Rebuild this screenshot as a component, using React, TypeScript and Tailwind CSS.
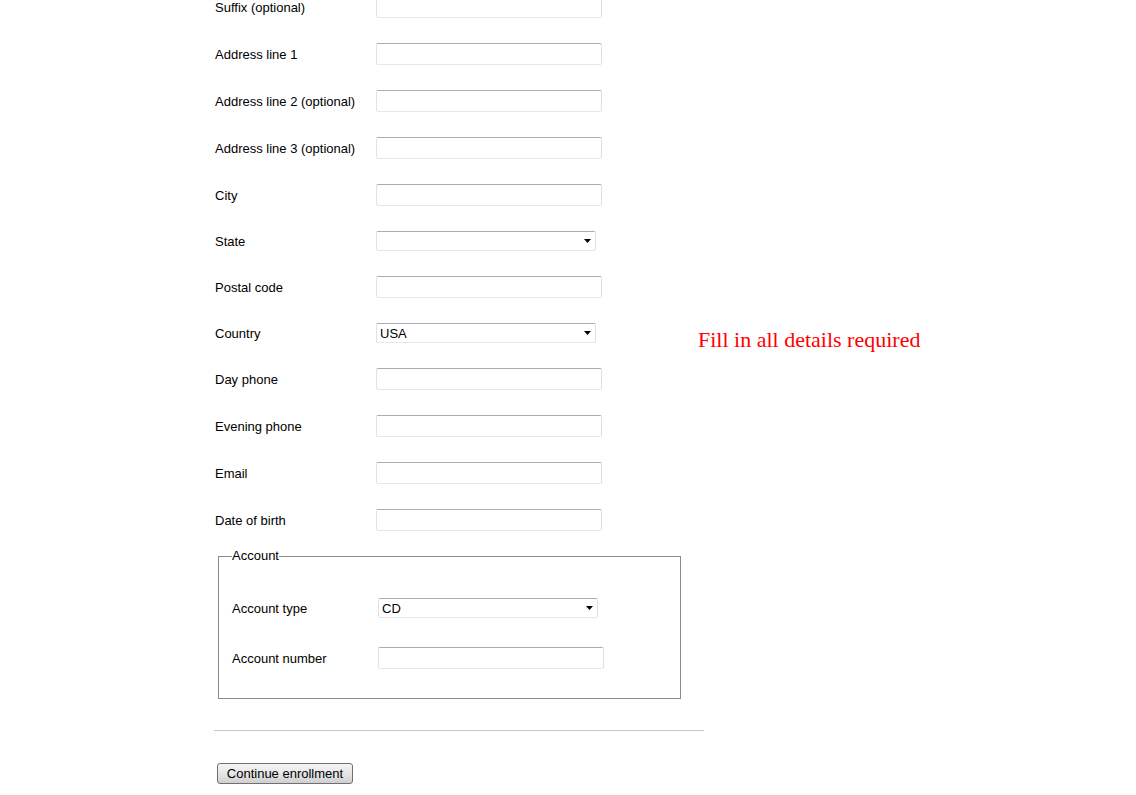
import React from "react";

type Field = { label: string; kind: "input" | "select"; value?: string };

// main enrollment fields, top of page is already scrolled past
const fields: Field[] = [
  { label: "Suffix (optional)", kind: "input" },
  { label: "Address line 1", kind: "input" },
  { label: "Address line 2 (optional)", kind: "input" },
  { label: "Address line 3 (optional)", kind: "input" },
  { label: "City", kind: "input" },
  { label: "State", kind: "select", value: "" },
  { label: "Postal code", kind: "input" },
  { label: "Country", kind: "select", value: "USA" },
  { label: "Day phone", kind: "input" },
  { label: "Evening phone", kind: "input" },
  { label: "Email", kind: "input" },
  { label: "Date of birth", kind: "input" },
];

function TextBox() {
  return (
    <input
      type="text"
      className="w-[226px] h-[22px] border border-[#e3e9ef] border-t-[#abadb3] border-l-[#e2e3ea] border-r-[#dbdfe6] rounded-[2px] bg-white px-[3px] text-[13px] outline-none"
    />
  );
}

function DropDown({ value }: { value: string }) {
  return (
    <div className="relative w-[220px] h-[20px] border border-[#e3e9ef] border-t-[#abadb3] border-l-[#e2e3ea] border-r-[#dbdfe6] rounded-[2px] bg-white flex items-center pl-[3px] text-[13px] leading-[15px] text-black">
      <span>{value}</span>
      <svg
        className="absolute right-[4px] top-[7px]"
        width="7"
        height="4"
        viewBox="0 0 7 4"
      >
        <path d="M0 0H7L3.5 4Z" fill="#000" />
      </svg>
    </div>
  );
}

export default function App() {
  return (
    <div className="min-h-[795px] w-full bg-white overflow-hidden font-['Liberation_Sans',Arial,sans-serif] text-[13px] leading-[15px] text-black">
      <div className="pl-[214px] mt-[-16px]">
        <div className="flex">
          {/* form column */}
          <div className="w-[484px]">
            {fields.map((f) => (
              <div key={f.label} className="flex items-center pl-[1px] pt-[12px] pb-[13px]">
                <span className="w-[161px]">{f.label}</span>
                {f.kind === "input" ? <TextBox /> : <DropDown value={f.value ?? ""} />}
              </div>
            ))}

            <fieldset className="ml-[4px] mt-[4px] w-[463px] border border-[#8a8a8a] px-[13px] pb-[29px]">
              <legend className="leading-[16px] px-0">Account</legend>
              <div className="flex items-center mt-[34px]">
                <span className="w-[146px]">Account type</span>
                <DropDown value="CD" />
              </div>
              <div className="flex items-center mt-[29px]">
                <span className="w-[146px]">Account number</span>
                <TextBox />
              </div>
            </fieldset>
          </div>

          {/* validation message */}
          <div className="mt-[343px] font-['Liberation_Serif','Times_New_Roman',serif] text-[22px] leading-[25px] text-[#ff0000] whitespace-nowrap">
            Fill in all details required
          </div>
        </div>

        <div className="mt-[31px] w-[490px] h-px bg-[#c8c8c8]" />

        <button className="ml-[3px] mt-[32px] h-[21px] w-[136px] border border-[#707070] rounded-[3px] bg-gradient-to-b from-[#f4f4f4] via-[#e6e6e6] to-[#cfcfcf] text-[13px] leading-[15px] text-black">
          Continue enrollment
        </button>
      </div>
    </div>
  );
}
